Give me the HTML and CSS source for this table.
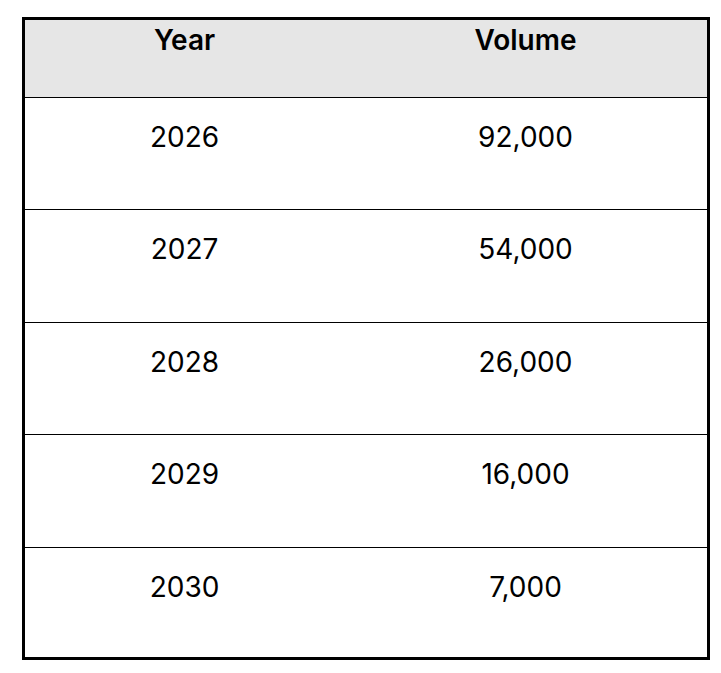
FILE: index.html
```html
<!DOCTYPE html>
<html>
<head>
<meta charset="utf-8">
<link rel="stylesheet" href="styles.css">
</head>
<body>
<div class="table">
  <div class="row head">
    <div class="cell c1">Year</div>
    <div class="cell c2">Volume</div>
  </div>
  <div class="row">
    <div class="cell c1">2026</div>
    <div class="cell c2">92,000</div>
  </div>
  <div class="row">
    <div class="cell c1">2027</div>
    <div class="cell c2">54,000</div>
  </div>
  <div class="row">
    <div class="cell c1">2028</div>
    <div class="cell c2">26,000</div>
  </div>
  <div class="row">
    <div class="cell c1">2029</div>
    <div class="cell c2">16,000</div>
  </div>
  <div class="row last">
    <div class="cell c1">2030</div>
    <div class="cell c2">7,000</div>
  </div>
</div>
</body>
</html>
```
FILE: styles.css
```css
html, body {
  margin: 0;
  padding: 0;
  background: #ffffff;
}
body {
  padding: 17px 0 0 22px;
  font-family: Inter, "Liberation Sans", sans-serif;
  color: #000;
}
.table {
  box-sizing: border-box;
  width: 688px;
  height: 643px;
  border: 3px solid #000;
  display: flex;
  flex-direction: column;
  overflow: hidden;
}
.row {
  box-sizing: border-box;
  display: grid;
  grid-template-columns: 319px 1fr;
  height: 112.4px;
  border-bottom: 1px solid #000;
  font-size: 28px;
  line-height: 30px;
  padding-top: 24px;
  flex: none;
}
.row.head {
  height: 78px;
  background: #e6e6e6;
  font-weight: 600;
  padding-top: 5px;
}
.row.last {
  border-bottom: none;
  flex: 1;
}
.cell {
  text-align: center;
}
```
